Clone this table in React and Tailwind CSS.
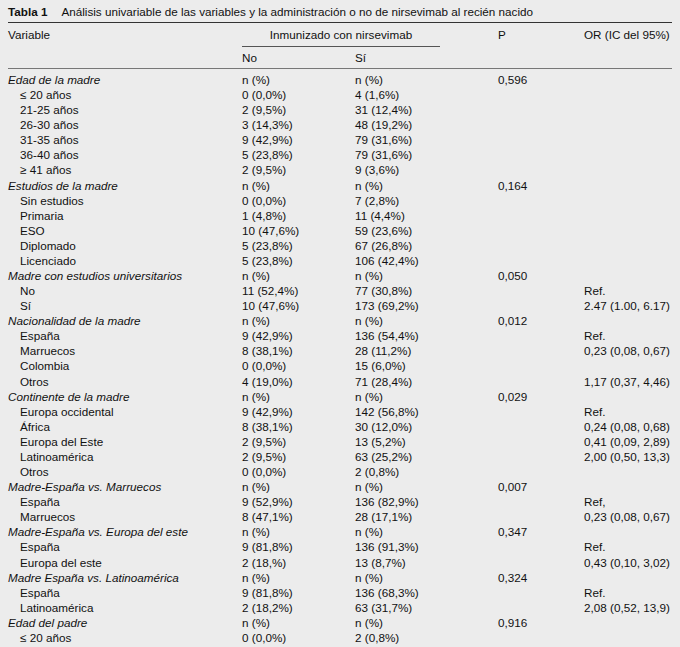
import React from 'react'

const rows = [
  ['Edad de la madre', 'h', 'n (%)', 'n (%)', '0,596', ''],
  ['≤ 20 años', 's', '0 (0,0%)', '4 (1,6%)', '', ''],
  ['21-25 años', 's', '2 (9,5%)', '31 (12,4%)', '', ''],
  ['26-30 años', 's', '3 (14,3%)', '48 (19,2%)', '', ''],
  ['31-35 años', 's', '9 (42,9%)', '79 (31,6%)', '', ''],
  ['36-40 años', 's', '5 (23,8%)', '79 (31,6%)', '', ''],
  ['≥ 41 años', 's', '2 (9,5%)', '9 (3,6%)', '', ''],
  ['Estudios de la madre', 'h', 'n (%)', 'n (%)', '0,164', ''],
  ['Sin estudios', 's', '0 (0,0%)', '7 (2,8%)', '', ''],
  ['Primaria', 's', '1 (4,8%)', '11 (4,4%)', '', ''],
  ['ESO', 's', '10 (47,6%)', '59 (23,6%)', '', ''],
  ['Diplomado', 's', '5 (23,8%)', '67 (26,8%)', '', ''],
  ['Licenciado', 's', '5 (23,8%)', '106 (42,4%)', '', ''],
  ['Madre con estudios universitarios', 'h', 'n (%)', 'n (%)', '0,050', ''],
  ['No', 's', '11 (52,4%)', '77 (30,8%)', '', 'Ref.'],
  ['Sí', 's', '10 (47,6%)', '173 (69,2%)', '', '2.47 (1.00, 6.17)'],
  ['Nacionalidad de la madre', 'h', 'n (%)', 'n (%)', '0,012', ''],
  ['España', 's', '9 (42,9%)', '136 (54,4%)', '', 'Ref.'],
  ['Marruecos', 's', '8 (38,1%)', '28 (11,2%)', '', '0,23 (0,08, 0,67)'],
  ['Colombia', 's', '0 (0,0%)', '15 (6,0%)', '', ''],
  ['Otros', 's', '4 (19,0%)', '71 (28,4%)', '', '1,17 (0,37, 4,46)'],
  ['Continente de la madre', 'h', 'n (%)', 'n (%)', '0,029', ''],
  ['Europa occidental', 's', '9 (42,9%)', '142 (56,8%)', '', 'Ref.'],
  ['África', 's', '8 (38,1%)', '30 (12,0%)', '', '0,24 (0,08, 0,68)'],
  ['Europa del Este', 's', '2 (9,5%)', '13 (5,2%)', '', '0,41 (0,09, 2,89)'],
  ['Latinoamérica', 's', '2 (9,5%)', '63 (25,2%)', '', '2,00 (0,50, 13,3)'],
  ['Otros', 's', '0 (0,0%)', '2 (0,8%)', '', ''],
  ['Madre-España vs. Marruecos', 'h', 'n (%)', 'n (%)', '0,007', ''],
  ['España', 's', '9 (52,9%)', '136 (82,9%)', '', 'Ref,'],
  ['Marruecos', 's', '8 (47,1%)', '28 (17,1%)', '', '0,23 (0,08, 0,67)'],
  ['Madre-España vs. Europa del este', 'h', 'n (%)', 'n (%)', '0,347', ''],
  ['España', 's', '9 (81,8%)', '136 (91,3%)', '', 'Ref.'],
  ['Europa del este', 's', '2 (18,%)', '13 (8,7%)', '', '0,43 (0,10, 3,02)'],
  ['Madre España vs. Latinoamérica', 'h', 'n (%)', 'n (%)', '0,324', ''],
  ['España', 's', '9 (81,8%)', '136 (68,3%)', '', 'Ref.'],
  ['Latinoamérica', 's', '2 (18,2%)', '63 (31,7%)', '', '2,08 (0,52, 13,9)'],
  ['Edad del padre', 'h', 'n (%)', 'n (%)', '0,916', ''],
  ['≤ 20 años', 's', '0 (0,0%)', '2 (0,8%)', '', ''],
]

const cols = 'grid grid-cols-[234px_113px_143px_86px_1fr]'

const App = () => {
  return (
    <div className="min-h-[647px] bg-[#ececec] px-2 pt-[4px] text-[11.7px] text-[#111] font-['Liberation_Sans',Arial,sans-serif] overflow-hidden">
      <div className="leading-[15px] whitespace-nowrap">
        <span className="font-bold">Tabla 1</span>
        <span className="ml-[14px]">Análisis univariable de las variables y la administración o no de nirsevimab al recién nacido</span>
      </div>

      <div className="mt-[3px] border-t-[1.5px] border-[#333]">
        <div className={`${cols} pt-[3.5px] leading-[15px]`}>
          <div>Variable</div>
          <div className="col-span-2">
            <div className="w-[198px] border-b border-[#555] pb-[4px] text-center">Inmunizado con nirsevimab</div>
          </div>
          <div>P</div>
          <div>OR (IC del 95%)</div>
        </div>
        <div className={`${cols} pt-[3px] pb-[3px] leading-[15px] border-b-[1.5px] border-[#777]`}>
          <div></div>
          <div>No</div>
          <div>Sí</div>
          <div></div>
          <div></div>
        </div>
      </div>

      <div className="pt-[3.5px]">
        {rows.map(([label, kind, no, si, p, or], i) => (
          <div key={i} className={`${cols} leading-[15.08px] whitespace-nowrap`}>
            <div className={kind === 'h' ? 'italic' : 'pl-[12px]'}>{label}</div>
            <div>{no}</div>
            <div>{si}</div>
            <div>{p}</div>
            <div>{or}</div>
          </div>
        ))}
      </div>
    </div>
  )
}

export default App
